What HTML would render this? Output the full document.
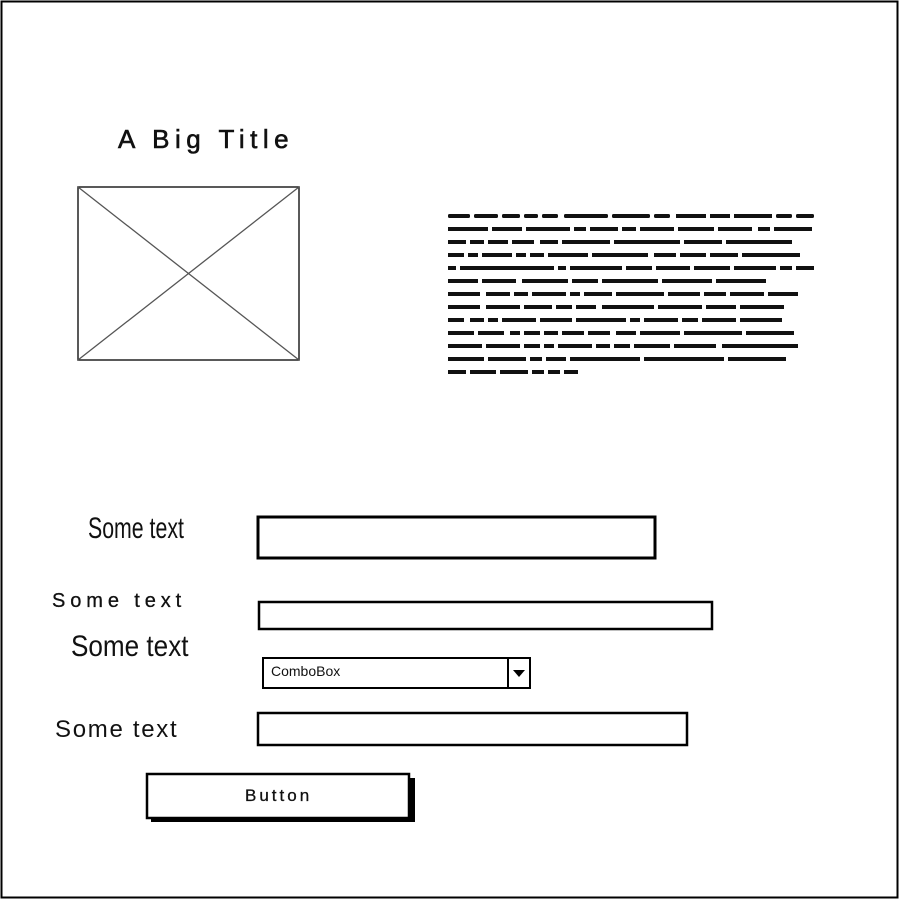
<!DOCTYPE html>
<html><head><meta charset="utf-8"><style>
html,body{margin:0;padding:0;background:#fff;}
body{width:900px;height:900px;position:relative;overflow:hidden;font-family:"Liberation Sans",sans-serif;}
.a{position:absolute;white-space:nowrap;color:#111;}
.s{display:inline-block;transform-origin:0 0;}
</style></head><body>
<svg width="900" height="900" style="position:absolute;left:0;top:0">
<rect x="1.5" y="1.5" width="896" height="896" fill="none" stroke="#000" stroke-width="2"/>
<rect x="78" y="187" width="221" height="173" fill="none" stroke="#222" stroke-width="1.5"/>
<line x1="78" y1="187" x2="299" y2="360" stroke="#555" stroke-width="1.3"/>
<line x1="299" y1="187" x2="78" y2="360" stroke="#555" stroke-width="1.3"/>
<rect x="258" y="517" width="397" height="41" fill="none" stroke="#000" stroke-width="3"/>
<rect x="259" y="602" width="453" height="27" fill="none" stroke="#000" stroke-width="2.5"/>
<rect x="263" y="658" width="267" height="30" fill="none" stroke="#000" stroke-width="2"/>
<line x1="508" y1="658" x2="508" y2="688" stroke="#000" stroke-width="2"/>
<polygon points="513,670 525,670 519,677" fill="#000"/>
<rect x="258" y="713" width="429" height="32" fill="none" stroke="#000" stroke-width="2.5"/>
<rect x="151" y="778" width="264" height="44" fill="#000"/>
<rect x="147" y="774" width="262" height="44" fill="#fff" stroke="#000" stroke-width="2.5"/>
<g fill="#111">
<rect x="448" y="214" width="22" height="4" rx="1.5"/><rect x="474" y="214" width="24" height="4" rx="1.5"/><rect x="502" y="214" width="18" height="4" rx="1.5"/><rect x="524" y="214" width="14" height="4" rx="1.5"/><rect x="542" y="214" width="16" height="4" rx="1.5"/><rect x="564" y="214" width="44" height="4" rx="1.5"/><rect x="612" y="214" width="38" height="4" rx="1.5"/><rect x="654" y="214" width="16" height="4" rx="1.5"/><rect x="676" y="214" width="30" height="4"/><rect x="710" y="214" width="20" height="4"/><rect x="734" y="214" width="38" height="4"/><rect x="776" y="214" width="16" height="4" rx="1.5"/><rect x="796" y="214" width="18" height="4" rx="1.5"/>
<rect x="448" y="227" width="40" height="4"/><rect x="492" y="227" width="30" height="4"/><rect x="526" y="227" width="44" height="4"/><rect x="574" y="227" width="12" height="4"/><rect x="590" y="227" width="28" height="4"/><rect x="622" y="227" width="14" height="4"/><rect x="640" y="227" width="34" height="4"/><rect x="678" y="227" width="36" height="4"/><rect x="718" y="227" width="34" height="4"/><rect x="758" y="227" width="12" height="4"/><rect x="774" y="227" width="38" height="4"/>
<rect x="448" y="240" width="18" height="4"/><rect x="470" y="240" width="14" height="4"/><rect x="488" y="240" width="20" height="4"/><rect x="512" y="240" width="22" height="4"/><rect x="540" y="240" width="18" height="4"/><rect x="562" y="240" width="48" height="4"/><rect x="614" y="240" width="66" height="4"/><rect x="684" y="240" width="38" height="4"/><rect x="726" y="240" width="66" height="4"/>
<rect x="448" y="253" width="16" height="4"/><rect x="468" y="253" width="10" height="4"/><rect x="482" y="253" width="30" height="4"/><rect x="516" y="253" width="10" height="4"/><rect x="530" y="253" width="14" height="4"/><rect x="548" y="253" width="40" height="4"/><rect x="592" y="253" width="56" height="4"/><rect x="654" y="253" width="22" height="4"/><rect x="680" y="253" width="26" height="4"/><rect x="710" y="253" width="28" height="4"/><rect x="742" y="253" width="58" height="4"/>
<rect x="448" y="266" width="8" height="4"/><rect x="460" y="266" width="94" height="4"/><rect x="558" y="266" width="8" height="4"/><rect x="570" y="266" width="52" height="4"/><rect x="626" y="266" width="26" height="4"/><rect x="656" y="266" width="34" height="4"/><rect x="694" y="266" width="36" height="4"/><rect x="734" y="266" width="42" height="4"/><rect x="780" y="266" width="12" height="4"/><rect x="796" y="266" width="18" height="4"/>
<rect x="448" y="279" width="30" height="4"/><rect x="482" y="279" width="34" height="4"/><rect x="522" y="279" width="46" height="4"/><rect x="572" y="279" width="26" height="4"/><rect x="602" y="279" width="56" height="4"/><rect x="662" y="279" width="50" height="4"/><rect x="716" y="279" width="50" height="4"/>
<rect x="448" y="292" width="32" height="4"/><rect x="486" y="292" width="24" height="4"/><rect x="514" y="292" width="14" height="4"/><rect x="532" y="292" width="34" height="4"/><rect x="570" y="292" width="10" height="4"/><rect x="584" y="292" width="28" height="4"/><rect x="616" y="292" width="48" height="4"/><rect x="668" y="292" width="32" height="4"/><rect x="704" y="292" width="22" height="4"/><rect x="730" y="292" width="34" height="4"/><rect x="768" y="292" width="30" height="4"/>
<rect x="448" y="305" width="32" height="4"/><rect x="486" y="305" width="34" height="4"/><rect x="524" y="305" width="28" height="4"/><rect x="556" y="305" width="16" height="4"/><rect x="576" y="305" width="20" height="4"/><rect x="602" y="305" width="52" height="4"/><rect x="658" y="305" width="44" height="4"/><rect x="706" y="305" width="30" height="4"/><rect x="740" y="305" width="44" height="4"/>
<rect x="448" y="318" width="16" height="4"/><rect x="470" y="318" width="14" height="4"/><rect x="488" y="318" width="10" height="4"/><rect x="502" y="318" width="34" height="4"/><rect x="540" y="318" width="32" height="4"/><rect x="576" y="318" width="50" height="4"/><rect x="630" y="318" width="10" height="4"/><rect x="644" y="318" width="34" height="4"/><rect x="682" y="318" width="16" height="4"/><rect x="702" y="318" width="34" height="4"/><rect x="740" y="318" width="42" height="4"/>
<rect x="448" y="331" width="26" height="4"/><rect x="478" y="331" width="26" height="4"/><rect x="510" y="331" width="10" height="4"/><rect x="524" y="331" width="16" height="4"/><rect x="544" y="331" width="14" height="4"/><rect x="562" y="331" width="22" height="4"/><rect x="588" y="331" width="22" height="4"/><rect x="616" y="331" width="20" height="4"/><rect x="640" y="331" width="40" height="4"/><rect x="684" y="331" width="58" height="4"/><rect x="746" y="331" width="48" height="4"/>
<rect x="448" y="344" width="34" height="4"/><rect x="486" y="344" width="34" height="4"/><rect x="524" y="344" width="16" height="4"/><rect x="544" y="344" width="10" height="4"/><rect x="558" y="344" width="34" height="4"/><rect x="596" y="344" width="14" height="4"/><rect x="614" y="344" width="16" height="4"/><rect x="634" y="344" width="36" height="4"/><rect x="674" y="344" width="42" height="4"/><rect x="722" y="344" width="76" height="4"/>
<rect x="448" y="357" width="36" height="4"/><rect x="488" y="357" width="38" height="4"/><rect x="530" y="357" width="12" height="4"/><rect x="546" y="357" width="20" height="4"/><rect x="570" y="357" width="70" height="4"/><rect x="644" y="357" width="80" height="4"/><rect x="728" y="357" width="58" height="4"/>
<rect x="448" y="370" width="18" height="4"/><rect x="470" y="370" width="26" height="4"/><rect x="500" y="370" width="28" height="4"/><rect x="532" y="370" width="12" height="4"/><rect x="548" y="370" width="12" height="4"/><rect x="564" y="370" width="14" height="4"/>
</g>
</svg>
<div class="a" style="left:118px;top:124px;font-size:26px;letter-spacing:5.5px;-webkit-text-stroke:0.6px #111;">A Big Title</div>
<div class="a" style="left:88px;top:512px;font-size:30px;"><span class="s" style="transform:scaleX(0.71)">Some text</span></div>
<div class="a" style="left:52px;top:590px;font-size:20px;letter-spacing:4.9px;-webkit-text-stroke:0.3px #111;">Some text</div>
<div class="a" style="left:71px;top:630px;font-size:30px;"><span class="s" style="transform:scaleX(0.87)">Some text</span></div>
<div class="a" style="left:271px;top:663px;font-size:14px;">ComboBox</div>
<div class="a" style="left:55px;top:716px;font-size:24px;letter-spacing:1.7px;">Some text</div>
<div class="a" style="left:245px;top:786px;font-size:17px;letter-spacing:3px;-webkit-text-stroke:0.3px #111;">Button</div>
</body></html>
